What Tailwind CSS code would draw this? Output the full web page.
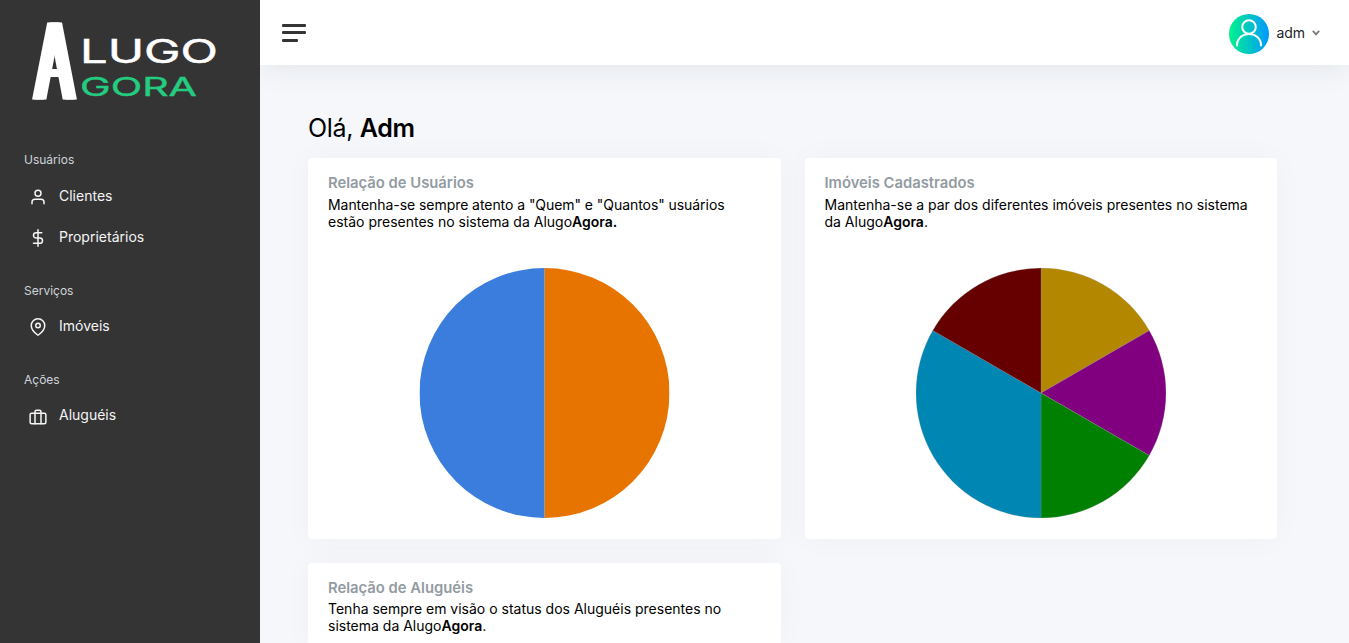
<!DOCTYPE html>
<html lang="pt-BR">
<head>
<meta charset="utf-8">
<title>AlugoAgora</title>
<script src="https://cdn.jsdelivr.net/npm/@tailwindcss/browser@4"></script>
</head>
<body class="flex h-screen overflow-hidden bg-[#f5f7fb] font-['Inter',sans-serif] text-[14px] text-black">
<aside class="z-10 h-full w-[260px] shrink-0 bg-[#343434] text-[14px] text-[#f4f5f6]">
  <svg class="block h-[146px] w-[260px]" viewBox="0 0 260 146">
    <text id="logo-a" transform="translate(36.500 98.500) scale(.45 1)" font-family="Liberation Sans" font-size="111" textLength="80" lengthAdjust="spacingAndGlyphs" fill="#fff">A</text>
    <use href="#logo-a" x="-4.500"/><use href="#logo-a" x="-2.200"/><use href="#logo-a" x="2.200"/><use href="#logo-a" x="4.500"/>
    <text x="80" y="62.500" font-family="Inter" font-size="33" textLength="138" lengthAdjust="spacingAndGlyphs" fill="#fff" stroke="#fff" stroke-width=".5">LUGO</text>
    <text x="80" y="95.500" font-family="Inter" font-size="25.500" textLength="117" lengthAdjust="spacingAndGlyphs" fill="#24cc80" stroke="#24cc80" stroke-width=".4">GORA</text>
  </svg>
  <nav>
    <h2 class="h-[29px] px-6 pt-[5px] text-[12px] leading-[18px] text-[#ced4da]">Usuários</h2>
    <a class="flex h-[41px] items-center pl-[29px]"><svg class="mr-3 mt-[2px] size-[18px]" viewBox="0 0 24 24" fill="none" stroke="currentColor" stroke-width="2" stroke-linecap="round" stroke-linejoin="round"><path d="M20 21v-2a4 4 0 0 0-4-4H8a4 4 0 0 0-4 4v2"/><circle cx="12" cy="7" r="4"/></svg>Clientes</a>
    <a class="flex h-[41px] items-center pl-[29px]"><svg class="mr-3 mt-[2px] size-[18px]" viewBox="0 0 24 24" fill="none" stroke="currentColor" stroke-width="2" stroke-linecap="round" stroke-linejoin="round"><path d="M12 1v22M17 5H9.500a3.500 3.500 0 0 0 0 7h5a3.500 3.500 0 0 1 0 7H6"/></svg>Proprietários</a>
    <h2 class="mt-5 h-7 px-6 pt-[5px] text-[12px] leading-[18px] text-[#ced4da]">Serviços</h2>
    <a class="flex h-[41px] items-center pl-[29px]"><svg class="mr-3 mt-[2px] size-[18px]" viewBox="0 0 24 24" fill="none" stroke="currentColor" stroke-width="2" stroke-linecap="round" stroke-linejoin="round"><path d="M21 10c0 7-9 13-9 13s-9-6-9-13a9 9 0 0 1 18 0z"/><circle cx="12" cy="10" r="3"/></svg>Imóveis</a>
    <h2 class="mt-5 h-7 px-6 pt-[5px] text-[12px] leading-[18px] text-[#ced4da]">Ações</h2>
    <a class="flex h-[41px] items-center pl-[29px]"><svg class="mr-3 mt-[4px] size-[18px]" viewBox="0 0 24 24" fill="none" stroke="currentColor" stroke-width="2" stroke-linecap="round" stroke-linejoin="round"><rect x="1.500" y="7" width="21" height="14" rx="2"/><path d="M16 21V5a2 2 0 0 0-2-2h-4a2 2 0 0 0-2 2v16"/></svg>Aluguéis</a>
  </nav>
</aside>
<div class="flex min-w-0 flex-1 flex-col overflow-hidden">
  <header class="flex h-[65px] shrink-0 items-center justify-between bg-white pl-[22px] pr-7 shadow-[0_0_32px_0_rgba(33,37,41,0.1)]">
    <div class="flex flex-col gap-[5px] text-[#343434]">
      <span class="block h-[3px] w-6 rounded-[1px] bg-current"></span>
      <span class="-mt-px block h-[3px] w-6 rounded-[1px] bg-current"></span>
      <span class="block h-[3px] w-4 rounded-[1px] bg-current"></span>
    </div>
    <div class="flex items-center text-[14px] text-[#212529]">
      <svg class="mr-2 mt-[3px] size-10" viewBox="0 0 40 40" fill="none"><defs><linearGradient id="g" x1="0" x2="1"><stop stop-color="#00f38a"/><stop offset="1" stop-color="#0098ff"/></linearGradient></defs><circle cx="20" cy="20" r="20" fill="url(#g)"/><g stroke="#fff" stroke-width="2" stroke-linecap="round"><circle cx="20" cy="13" r="6.800"/><path d="M8 31.500C8 25 13 20 20 20s12 5 12 11.500"/></g></svg>
      <span class="tracking-[-.1px]">adm</span>
      <svg class="ml-[7px] mr-px h-[6px] w-2" viewBox="0 0 8 6" fill="none" stroke="#777b7e" stroke-width="1.800"><path d="M.8.8 4 4.300 7.200.8"/></svg>
    </div>
  </header>
  <main class="px-12 pt-[46px]">
    <h1 class="mb-3 h-[35px] text-[25px] leading-[35px] tracking-[-.32px]">Olá, <b class="font-semibold">Adm</b></h1>
    <div class="grid w-[969px] grid-cols-2 gap-6">
      <section class="h-[381px] rounded-[4px] bg-white px-5 pt-4 shadow-[0_0_32px_0_rgba(33,37,41,0.03)]">
        <h2 class="mb-1 text-[14.8px] leading-[18px] font-semibold text-[#939ba2]">Relação de Usuários</h2>
        <p class="leading-[17px]"><span class="tracking-[-.06px]">Mantenha-se sempre atento a "Quem" e "Quantos" usuários</span><br>estão presentes no sistema da Alugo<b class="font-semibold">Agora.</b></p>
        <svg class="mx-auto mt-[38px] block size-[250px] translate-x-[.5px]" viewBox="-125 -125 250 250"><path d="M0 0V-125A125 125 0 0 1 0 125Z" fill="#e87400"/><path d="M0 0V125A125 125 0 0 1 0-125Z" fill="#3b7ddd"/><path d="M0-125V125" stroke="#a09b94" stroke-width=".7"/></svg>
      </section>
      <section class="h-[381px] rounded-[4px] bg-white px-5 pt-4 shadow-[0_0_32px_0_rgba(33,37,41,0.03)]">
        <h2 class="mb-1 text-[14.8px] leading-[18px] font-semibold text-[#939ba2]">Imóveis Cadastrados</h2>
        <p class="leading-[17px]">Mantenha-se a par dos diferentes imóveis presentes no sistema<br>da Alugo<b class="font-semibold">Agora</b>.</p>
        <svg class="mx-auto mt-[38px] block size-[250px]" viewBox="-125 -125 250 250" stroke="#999" stroke-opacity=".6" stroke-width=".4"><path d="M0 0V-125A125 125 0 0 1 108.250-62.500Z" fill="#b38800"/><path d="M0 0 108.250-62.500A125 125 0 0 1 108.250 62.500Z" fill="#800080"/><path d="M0 0 108.250 62.500A125 125 0 0 1 0 125Z" fill="#008000"/><path d="M0 0V125A125 125 0 0 1-108.250-62.500Z" fill="#0086b3"/><path d="M0 0-108.250-62.500A125 125 0 0 1 0-125Z" fill="#660000"/></svg>
      </section>
      <section class="h-[80px] rounded-t-[4px] bg-white px-5 pt-4 shadow-[0_0_32px_0_rgba(33,37,41,0.03)]">
        <h2 class="mb-[3px] text-[14.8px] leading-[18px] font-semibold text-[#939ba2]">Relação de Aluguéis</h2>
        <p class="leading-[17px]">Tenha sempre em visão o status dos Aluguéis presentes no<br>sistema da Alugo<b class="font-semibold">Agora</b>.</p>
      </section>
    </div>
  </main>
</div>
</body>
</html>
